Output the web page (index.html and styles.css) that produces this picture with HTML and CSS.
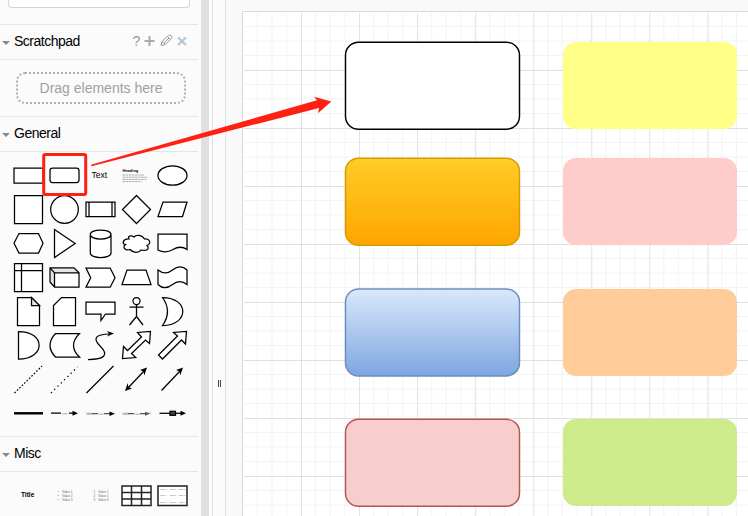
FILE: index.html
```html
<!DOCTYPE html>
<html lang="en">
<head>
<meta charset="utf-8">
<title>Diagram editor</title>
<link rel="stylesheet" href="styles.css">
</head>
<body>
<div class="app">
  <aside class="sidebar">
    <div class="search"><div class="search-box"></div></div>
    <div class="section-head"><i class="caret"></i><span class="section-name">Scratchpad</span>
      <svg class="tools" width="60" height="16" viewBox="0 0 60 16">
        <text x="1.5" y="13" class="help">?</text>
        <path d="M13.500 8h10M18.500 3v10" stroke="#aaa" stroke-width="2"/>
        <path d="M30 12.500l1-4 6.500-6q1.500-1 2.800.3t.2 2.800l-6.500 6zM31 8.500l3 3M36.500 3.500l3 3M33 10l5-5" fill="none" stroke="#999" stroke-width="1"/>
        <path d="M47 4.500l8 7.500M55 4.500L47 12" stroke="#b3c6d9" stroke-width="2.200"/>
      </svg>
    </div>
    <div class="scratch"><div class="drop">Drag elements here</div></div>
    <div class="section-head"><i class="caret"></i><span class="section-name">General</span></div>
    <div class="palette">
      <svg viewBox="-18.500 -17.500 36 34"><path d="M-14.500-7.500h29v15h-29z"/></svg>
      <svg viewBox="-18.500 -17.500 36 34"><rect x="-14.500" y="-7.500" width="29" height="14.500" rx="2.500"/></svg>
      <svg viewBox="-18.500 -17.500 36 34"><text class="label" x="-9" y="2.500">Text</text></svg>
      <svg viewBox="-18.500 -17.500 36 34"><text class="heading" x="-14" y="-4">Heading</text><path class="faint" d="M-14-.5H8M-14 1.700h25M-14 3.900H10M-14 6.100H5" stroke-dasharray="3 .6 2 .5"/></svg>
      <svg viewBox="-18.500 -17.500 36 34"><ellipse rx="14.500" ry="9.700"/></svg>

      <svg viewBox="-18.500 -17.500 36 34"><path d="M-14-14h28v28h-28z"/></svg>
      <svg viewBox="-18.500 -17.500 36 34"><circle r="13.800"/></svg>
      <svg viewBox="-18.500 -17.500 36 34"><path d="M-14.500-7.500h29v14.500h-29zM-11.500-7.500V7M11.500-7.500V7"/></svg>
      <svg viewBox="-18.500 -17.500 36 34"><path d="M0-14L14 0 0 14-14 0z"/></svg>
      <svg viewBox="-18.500 -17.500 36 34"><path d="M-9.500-7.500h24L10 7h-24.500z"/></svg>

      <svg viewBox="-18.500 -17.500 36 34"><path d="M-9.500-10H10l4.500 9.800L10 9.500H-9.500L-14.500-.2z"/></svg>
      <svg viewBox="-18.500 -17.500 36 34"><path d="M-10-14L10.700 0-10 14z"/></svg>
      <svg viewBox="-18.500 -17.500 36 34"><path d="M-10.200-9v18.500c0 6 20.700 6 20.700 0V-9c0-6-20.700-6-20.700 0s20.700 6 20.700 0"/></svg>
      <svg viewBox="-18.500 -17.500 36 34"><path d="M-7.500-4.500C-13-5-15.500.5-11 1c-4 3 .5 6.500 4.500 5C-3.500 9.700 2.500 9.500 4.500 6.500 10.500 8 13.500 5 10.500 2 15.500 0 13-5.500 8-4.500 5.500-9-.5-9-2.500-6.500-6-8.500-9-7.500-7.500-4.500z"/></svg>
      <svg viewBox="-18.500 -17.500 36 34"><path d="M-14.500-9.500h29V6q-6.500-4.500-14 0T-14.500 6.500z"/></svg>

      <svg viewBox="-18.500 -17.500 36 34"><path d="M-14-14h28v28h-28zM-7-14v28M-14-7h28"/></svg>
      <svg viewBox="-18.500 -17.500 36 34"><path class="shade" d="M-14.500-9.700H9.500l5 5H-10zM-14.500-9.700l4.500 5V9.500l-4.500-5z"/><path class="body" d="M-10-4.700h24.500V9.500H-10z"/><path class="line" d="M-14.500-9.700H9.500l5 5V9.500H-10l-4.500-5zM-14.500-9.700l4.500 5h24.500M-10-4.700V9.500"/></svg>
      <svg viewBox="-18.500 -17.500 36 34"><path d="M-14.500-9.500h24.200l4.800 9.700-4.800 9.500h-24.200l4.700-9.500z"/></svg>
      <svg viewBox="-18.500 -17.500 36 34"><path d="M-9.500-7.500H9.500l5 14.500h-29z"/></svg>
      <svg viewBox="-18.500 -17.500 36 34"><path d="M-14.500-7.500c5 4 9.500 4 14.500 0s9.500-5 14.500 0V7C9.500 3 5 3 0 7s-9.500 5-14.500 0z"/></svg>

      <svg viewBox="-18.500 -17.500 36 34"><path d="M-11-14H3l8 8v20h-22z"/><path class="fold" d="M3-14v8h8z"/></svg>
      <svg viewBox="-18.500 -17.500 36 34"><path d="M-3-14h14v28h-22V-6z"/></svg>
      <svg viewBox="-18.500 -17.500 36 34"><path d="M-14.500-9.500h29v12H5L.5 9V2.500h-15z"/></svg>
      <svg viewBox="-18.500 -17.500 36 34"><circle cy="-10.500" r="3.500"/><path d="M0-7V5M-7-4.500H7M0 5l-7 8.500M0 5l6.500 8.500"/></svg>
      <svg viewBox="-18.500 -17.500 36 34"><path d="M-10-14c27 0 27 28 0 28q10-14 0-28z"/></svg>

      <svg viewBox="-18.500 -17.500 36 34"><path d="M-10-14c27.500 0 27.500 27.500 0 27.500z"/></svg>
      <svg viewBox="-18.500 -17.500 36 34"><path d="M-9-12h24q-12 12 0 23.500H-9q-11-11.500 0-23.500z"/></svg>
      <svg viewBox="-18.500 -17.500 36 34"><path class="line" d="M-12.500 14C5 14 8 9 0 1-9-8-4-11 9-11.500"/><path class="tip" d="M13.500-12l-7-2.500 2 2.800-2 2.700z"/></svg>
      <svg viewBox="-18.500 -17.500 36 34"><path d="M14-14L13-2 9-5.500-5 8-.8 12-14 13l1-12 4 4L5-8.500 1-13z"/></svg>
      <svg viewBox="-18.500 -17.500 36 34"><path d="M14-14L13-1.500 9-5.500-10 13.500l-4-4L5-9.500 1-13z"/></svg>

      <svg viewBox="-18.500 -17.500 36 34"><path class="line" stroke-dasharray="1.600 1.800" d="M-14 13.500L13.500-13.500"/></svg>
      <svg viewBox="-18.500 -17.500 36 34"><path class="line" stroke-dasharray="1.300 3.300" d="M-13.500 13.500L13-12.500"/></svg>
      <svg viewBox="-18.500 -17.500 36 34"><path class="line" d="M-14 13.500L13-13.500"/></svg>
      <svg viewBox="-18.500 -17.500 36 34"><path class="line" d="M-9 9L8-9"/><path class="tip" d="M10.500-12L3.500-9.500l3.500 1.500.8 4zM-11.500 11.500l7-2.500-3.500-1.500-.8-4z"/></svg>
      <svg viewBox="-18.500 -17.500 36 34"><path class="line" d="M-11 11L8-9"/><path class="tip" d="M10.500-12L3.500-9.500l3.500 1.500.8 4z"/></svg>

      <svg viewBox="-18.500 -17.500 36 34"><path class="thick" d="M-14.500-.2h29"/></svg>
      <svg viewBox="-18.500 -17.500 36 34"><path class="line" d="M-13.500-.3h10M4.500-.3H10"/><path class="faint" d="M-2 .2h5"/><path class="tip" d="M13.500-.3L8-2.800v5z"/></svg>
      <svg viewBox="-18.500 -17.500 36 34"><path class="grey" d="M-8.500.2h6M3.500.2h7"/><path class="faint" d="M-14-.3h6M-14 .8h6M-2 .7h5"/><path class="tip" d="M14.500.2L9-2v4.400z"/></svg>
      <svg viewBox="-18.500 -17.500 36 34"><path class="grey" d="M-8.500.2h6M3.500.2h6"/><path class="faint" d="M-14-.3h6M-14 .8h6M-2 .7h5M9-.3h5.500"/><path class="soft" d="M13.500.2L8.500-1.800v4z"/></svg>
      <svg viewBox="-18.500 -17.500 36 34"><path class="line" d="M-13-.2H10"/><path class="tip" d="M13.500-.2L8-2.700v5z"/><rect class="dark" x="-2.500" y="-2.200" width="5.500" height="4"/></svg>
    </div>
    <div class="section-head"><i class="caret"></i><span class="section-name">Misc</span></div>
    <div class="palette">
      <svg viewBox="-18.500 -17.500 36 34"><text class="title" x="-7.500" y="1.500">Title</text></svg>
      <svg viewBox="-18.500 -17.500 36 34"><text class="list"><tspan x="-7" y="-2.800">•</tspan><tspan x="-2.500" y="-2.800">Value 1</tspan><tspan x="-7" y="1.200">•</tspan><tspan x="-2.500" y="1.200">Value 2</tspan><tspan x="-7" y="5.200">•</tspan><tspan x="-2.500" y="5.200">Value 3</tspan></text></svg>
      <svg viewBox="-18.500 -17.500 36 34"><text class="list"><tspan x="-7" y="-2.800">1</tspan><tspan x="-2.500" y="-2.800">Value 1</tspan><tspan x="-7" y="1.200">2</tspan><tspan x="-2.500" y="1.200">Value 2</tspan><tspan x="-7" y="5.200">3</tspan><tspan x="-2.500" y="5.200">Value 3</tspan></text></svg>
      <svg viewBox="-18.500 -17.500 36 34"><path class="table" d="M-14.500-9.500h29v19.500h-29zM-5-9.500V10M5-9.500V10M-14.500-3h29M-14.500 3.500h29"/></svg>
      <svg viewBox="-18.500 -17.500 36 34"><path class="table" d="M-14.500-9.500h29v19.500h-29z"/><text class="cells"><tspan x="-12.500" y="-6">Value 1</tspan><tspan x="-3" y="-6">Value 2</tspan><tspan x="6" y="-6">Value 3</tspan><tspan x="-12.500" y=".8">Value 4</tspan><tspan x="-3" y=".8">Value 5</tspan><tspan x="6" y=".8">Value 6</tspan><tspan x="-12.500" y="7">Value 7</tspan><tspan x="-3" y="7">Value 8</tspan><tspan x="6" y="7">Value 9</tspan></text></svg>
    </div>
  </aside>
  <div class="scrollbar"></div>
  <div class="splitter"><i class="grip"></i></div>
  <main class="canvas">
    <svg class="page" width="506" height="505" viewBox="242 11 506 505">
      <defs>
        <pattern id="grid" x="243" y="12" width="58.050" height="58" patternUnits="userSpaceOnUse">
          <path d="M14.500 0v58M29 0v58M43.500 0v58M0 14.500h58.050M0 29h58.050M0 43.500h58.050" stroke="#f3f3f3" stroke-width="1"/>
          <path d="M.5 0v58M0 .5h58.050" stroke="#e0e0e0" stroke-width="1"/>
        </pattern>
        <linearGradient id="amber" x2="0" y2="1"><stop stop-color="#ffcd28"/><stop offset="1" stop-color="#ffa500"/></linearGradient>
        <linearGradient id="azure" x2="0" y2="1"><stop stop-color="#dae8fc"/><stop offset="1" stop-color="#7ea6e0"/></linearGradient>
      </defs>
      <path d="M242 11h506v505H242z" fill="#fff"/>
      <path d="M244 13h504v503H244z" fill="url(#grid)"/>
      <path d="M748 11.500H242.500V516" fill="none" stroke="#d8d9db"/>
      <g stroke-width="1.450">
        <rect x="345.500" y="42.200" width="174" height="87" rx="13" fill="#fff" stroke="#000"/>
        <rect x="345.500" y="158.200" width="174" height="87" rx="13" fill="url(#amber)" stroke="#d79b00"/>
        <rect x="345.500" y="289" width="174" height="87" rx="13" fill="url(#azure)" stroke="#6c8ebf"/>
        <rect x="345.500" y="419.300" width="174" height="87" rx="13" fill="#f8cecc" stroke="#b85450"/>
      </g>
      <rect x="563" y="42" width="174" height="87" rx="13" fill="#ffff88"/>
      <rect x="563" y="158" width="174" height="87" rx="13" fill="#ffcccc"/>
      <rect x="563" y="289" width="174" height="87" rx="13" fill="#ffcc99"/>
      <rect x="563" y="419" width="174" height="87" rx="13" fill="#cdeb8b"/>
    </svg>
  </main>
  <svg class="callout" width="748" height="516" viewBox="0 0 748 516">
    <rect x="43.700" y="154.500" width="42" height="40" rx="1.500" fill="none" stroke="#ff2014" stroke-width="3"/>
    <path d="M91 164.800L317 100.300 314 96.800 331.300 101.500 318 113.300 319 108 91.500 166.200z" fill="#ff2014"/>
  </svg>
</div>
</body>
</html>
```
FILE: styles.css
```css
* { box-sizing: border-box; }
body { margin: 0; overflow: hidden; font-family: "Liberation Sans", Arial, sans-serif; }
.app { position: relative; display: flex; width: 748px; height: 516px; background: #fbfbfb; overflow: hidden; }
.sidebar { width: 198px; height: 516px; overflow: hidden; flex: none; }
.search { height: 25px; padding: 0 8px; border-bottom: 1px solid #e5e5e5; }
.search-box { width: 182px; height: 8px; background: #fff; border: 1px solid #d5d5d5; border-top: 0; border-radius: 0 0 4px 4px; }
.section-head { display: flex; align-items: center; height: 35px; padding-bottom: 2px; border-bottom: 1px solid #e5e5e5; }
.caret { width: 0; height: 0; margin: 3px 4px 0 2px; border: 4px solid transparent; border-top-color: #8a8a8a; border-bottom: 0; }
.section-name { font-size: 14px; letter-spacing: -0.5px; color: #000; }
.tools { margin-left: auto; margin-right: 7px; }
.help { font: 14px "Liberation Sans", sans-serif; fill: #999; }
.scratch { height: 57px; padding: 12px 12px 12px 16px; border-bottom: 1px solid #e5e5e5; }
.drop { height: 32px; width: 170px; border: 2px dotted #b0b0b0; border-radius: 9px; font-size: 14px; line-height: 29px; text-align: center; color: #a0a0a0; }
.palette { display: grid; grid-template-columns: repeat(5, 36px); grid-auto-rows: 34px; padding: 6px 8px 6px 10px; border-bottom: 1px solid #e5e5e5; }
.palette svg { display: block; width: 36px; height: 34px; fill: #fff; stroke: #000; stroke-width: 1.25; }
.palette .line { fill: none; }
.palette .tip { fill: #000; stroke: none; }
.palette .soft { fill: #555; stroke: none; }
.palette .grey { stroke: #555; }
.palette .thick { stroke-width: 2.4; }
.palette .table { stroke: #222; stroke-width: 1.5; }
.palette .faint { stroke: #888; stroke-width: 0.7; fill: none; }
.palette .shade { fill: #e6e6e6; stroke: none; }
.palette .body { stroke: none; }
.palette .fold { fill: #e6e6e6; }
.palette .dark { fill: #444; }
.palette text { stroke: none; fill: #000; }
.palette .label { font-size: 8.5px; }
.palette .heading { font-size: 4px; font-weight: bold; }
.palette .title { font-size: 6.5px; font-weight: bold; }
.palette .list { font-size: 3.2px; fill: #666; }
.palette .cells { font-size: 2px; fill: #555; }
.scrollbar { width: 8px; margin-left: 3px; background: #e0e0e0; flex: none; }
.splitter { display: flex; justify-content: center; align-items: flex-start; width: 14px; margin-left: 3px; padding-top: 380px; border: 1px solid #e0e0e0; border-width: 0 1px; flex: none; }
.grip { width: 3px; height: 7px; margin-left: 1px; border: 1px solid #444; border-width: 0 1px; }
.canvas { flex: 1; padding: 11px 0 0 16px; background: #f8f9fb; }
.page { display: block; }
.callout { position: absolute; left: 0; top: 0; }
```
